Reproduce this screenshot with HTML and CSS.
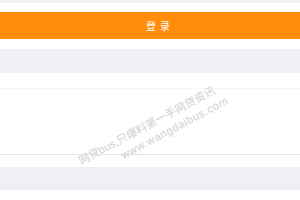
FILE: index.html
```html
<!DOCTYPE html>
<html>
<head>
<meta charset="utf-8">
<link rel="stylesheet" href="styles.css">
</head>
<body>
<div class="page">
  <div class="band band-top"></div>
  <div class="btn-wrap">
    <div class="btn">登录</div>
  </div>
  <div class="band band-mid"></div>
  <div class="list">
    <div class="row row-1"></div>
    <div class="row row-2"></div>
  </div>
  <div class="spacer"></div>
  <div class="band band-bottom"></div>
  <div class="foot"></div>
</div>
<div class="watermark">
  <div class="wm-line1">网贷bus,只爆料第一手网贷资讯</div>
  <div class="wm-line2">www.wangdaibus.com</div>
</div>
</body>
</html>
```
FILE: styles.css
```css
html, body {
  margin: 0;
  padding: 0;
  background: #ffffff;
  width: 300px;
  height: 200px;
  overflow: hidden;
  font-family: "Liberation Sans", "Noto Sans CJK SC", sans-serif;
}
.page {
  display: flex;
  flex-direction: column;
}
.band {
  background: #efeff4;
}
.band-top { height: 3px; }
.btn-wrap {
  padding: 9px 0 10px;
}
.btn {
  height: 27px;
  background: #ff8c0b;
  color: #ffffff;
  display: flex;
  align-items: center;
  justify-content: center;
  font-family: "Noto Sans CJK SC", sans-serif;
  font-size: 10px;
  letter-spacing: 4px;
  padding-left: 20px;
}
.band-mid { height: 24px; }
.list {
  background: #fff;
}
.row-1 {
  height: 15px;
  border-bottom: 1px solid #f4f4f4;
}
.row-2 {
  height: 65px;
  border-bottom: 1px solid #e6e6e6;
}
.spacer { height: 12px; }
.band-bottom { height: 23px; }
.foot { height: 10px; }
.watermark {
  position: absolute;
  left: 76px;
  top: 155px;
  transform-origin: 0 0;
  transform: rotate(-28deg);
  color: #cfcfcf;
  font-family: "Liberation Sans", "Noto Sans CJK SC", sans-serif;
  font-size: 11px;
  line-height: 15px;
  white-space: nowrap;
}
.wm-line2 {
  padding-left: 40px;
  letter-spacing: 0.6px;
}
```
